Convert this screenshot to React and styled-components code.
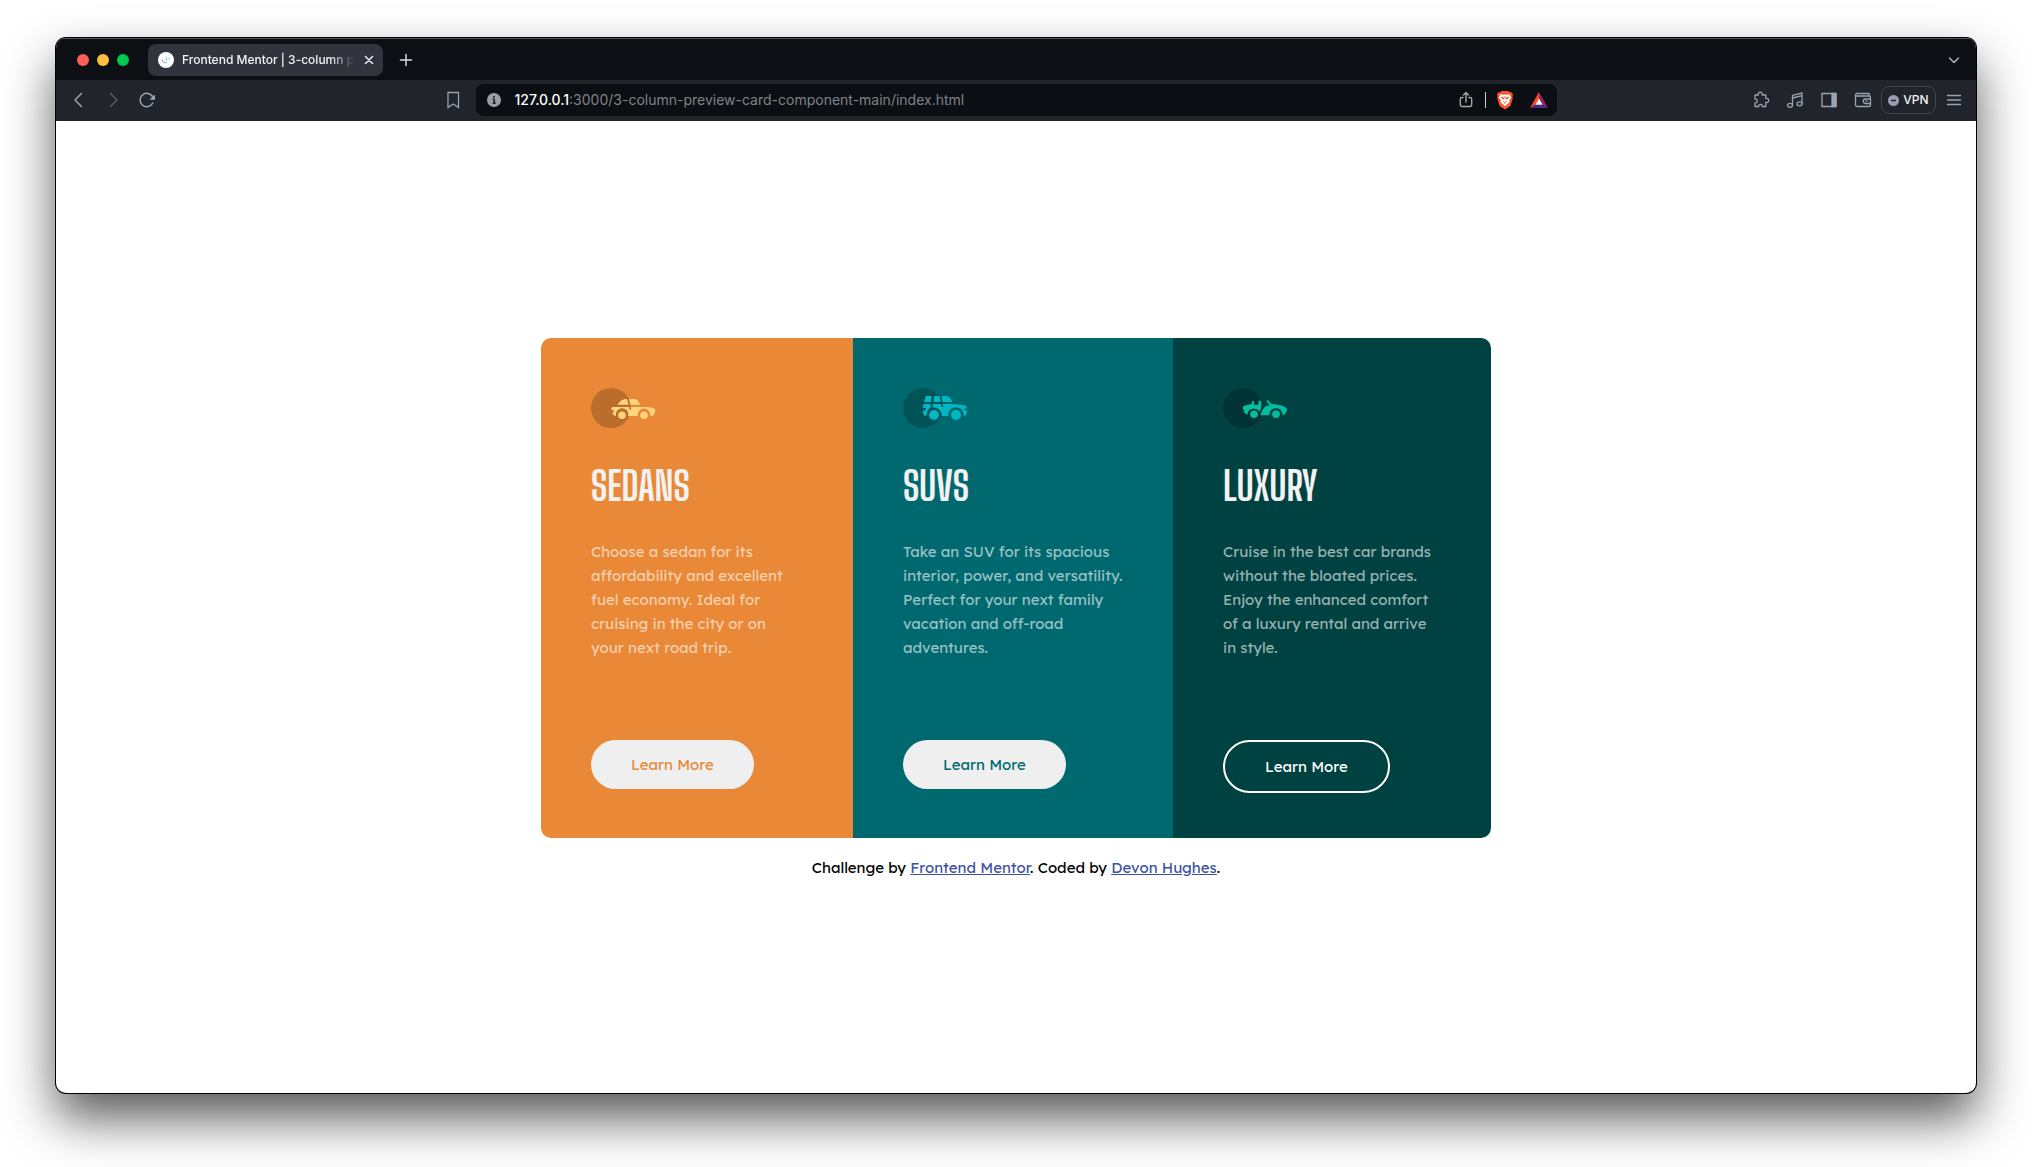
import React from "react";
import styled, { createGlobalStyle } from "styled-components";

const ui = `Inter, "Liberation Sans", sans-serif`;
const body = `"Lexend Deca", Inter, "Open Sans", sans-serif`;
const display = `"Big Shoulders Display", Roboto, sans-serif`;

const GlobalStyle = createGlobalStyle`
  *, *::before, *::after { box-sizing: border-box; }
  body { margin: 0; background: #fff; font-family: ${ui}; }
  h1, h2, p { margin: 0; }
  button { border: 0; background: none; padding: 0; font: inherit; cursor: pointer; }
`;

const Desktop = styled.div`
  display: flex;
  min-height: 100vh;
  padding: 38px 56px 74px;
`;

const Window = styled.div`
  display: flex;
  flex: 1;
  flex-direction: column;
  min-width: 0;
  overflow: hidden;
  border-radius: 10px;
  background: #fff;
  box-shadow: 0 0 0 1px #000, 0 25px 50px rgba(0, 0, 0, 0.66);
`;

const TabStrip = styled.header`
  display: flex;
  align-items: center;
  height: 42px;
  padding: 2px 10px 0 21px;
  background: #0c0f13;
  box-shadow: inset 0 1px 0 #54575a;
`;

const Lights = styled.div`
  display: flex;
  gap: 8px;
  margin-right: 19px;
`;

const Light = styled.button`
  width: 12px;
  height: 12px;
  border-radius: 50%;
  background: ${(p) => p.$color};
`;

const Tab = styled.div`
  display: flex;
  align-items: center;
  gap: 8px;
  width: 235px;
  height: 32px;
  padding: 0 8px 0 10px;
  border-radius: 8px;
  background: #31343d;
`;

const TabTitle = styled.span`
  flex: 1;
  white-space: nowrap;
  font-size: 12px;
  font-weight: 500;
  line-height: 16px;
  color: #f2f3f5;
  mask-image: linear-gradient(90deg, #000 148px, transparent 172px);
`;

const IconButton = styled.button`
  display: grid;
  place-items: center;
  flex: none;
  width: ${(p) => (p.$small ? 12 : 24)}px;
  height: 24px;
  color: ${(p) => p.$color || "#98a3b0"};
  svg { display: block; }
`;

const StripEnd = styled.div`
  display: flex;
  flex: 1;
  align-items: center;
  justify-content: space-between;
  padding-left: 11px;
`;

const Toolbar = styled.nav`
  display: grid;
  grid-template-columns: 1fr minmax(0, 1081px) 1fr;
  align-items: center;
  height: 41px;
  padding-bottom: 1px;
  background: #22242c;
`;

const ToolbarSide = styled.div`
  display: flex;
  align-items: center;
  justify-content: ${(p) => (p.$end ? "flex-end" : "space-between")};
  gap: 6px;
  padding: 0 ${(p) => (p.$end ? 10 : 11)}px;
`;

const IconGroup = styled.div`
  display: flex;
  gap: 10px;
`;

const AddressBar = styled.div`
  display: flex;
  align-items: center;
  height: 32px;
  padding: 0 6px;
  border-radius: 8px;
  background: #0b0e12;
`;

const Address = styled.div`
  flex: 1;
  padding-left: 9px;
  overflow: hidden;
  white-space: nowrap;
  outline: none;
  font-size: 14px;
  line-height: 20px;
  color: #808388;
`;

const Host = styled.span`
  font-weight: 500;
  color: #fff;
`;

const AddressTools = styled.div`
  display: flex;
  align-items: center;
  gap: 7px;
`;

const Divider = styled.span`
  width: 1px;
  height: 16px;
  background: #c9ccd0;
`;

const VpnButton = styled.button`
  display: flex;
  align-items: center;
  justify-content: center;
  gap: 4px;
  width: 55px;
  height: 28px;
  border: 1px solid #42454f;
  border-radius: 8px;
  font-size: 12px;
  font-weight: 500;
  line-height: 16px;
  color: #f2f3f5;
`;

const Page = styled.main`
  display: flex;
  flex: 1;
  flex-direction: column;
  align-items: center;
  justify-content: center;
  gap: 22px;
  font-family: ${body};
  font-size: 15px;
  font-weight: 400;
`;

const Cards = styled.section`
  display: flex;
  overflow: hidden;
  border-radius: 10px;
`;

const Card = styled.article`
  display: flex;
  flex-direction: column;
  align-items: flex-start;
  width: ${(p) => p.$width}px;
  padding: 50px 50px 45px;
  background: ${(p) => p.$color};
`;

const CardTitle = styled.h2`
  margin: 34px 0 30px;
  font-family: ${display};
  font-size: 40px;
  font-weight: 700;
  line-height: 48px;
  color: #f2f2f2;
`;

const CardText = styled.p`
  min-height: 120px;
  margin-bottom: 80px;
  white-space: pre;
  line-height: 24px;
  color: rgba(255, 255, 255, 0.6);
`;

const LearnMore = styled.button`
  padding: 15px 40px;
  border: ${(p) => (p.$outlined ? "2px solid #fff" : "0")};
  border-radius: 27px;
  background: ${(p) => (p.$outlined ? "transparent" : "#efefef")};
  line-height: 19px;
  color: ${(p) => p.$color};
`;

const Attribution = styled.footer`
  line-height: 16px;
  color: #000;
  a { color: #3e52a3; }
`;

const Stroke = ({ size = 18, width = 1.3, children }) => (
  <svg width={size} height={size} viewBox={`0 0 ${size} ${size}`} fill="none" stroke="currentColor" strokeWidth={width} strokeLinecap="round" strokeLinejoin="round" aria-hidden="true">
    {children}
  </svg>
);

const SedanIcon = () => (
  <svg width="65" height="40" viewBox="0 0 65 40" aria-hidden="true">
    <circle cx="20" cy="20" r="20" opacity=".2" />
    <g fill="#ffd47f">
      <path d="M26.7 16.8C28.6 13 31.5 11 36 11l1.6 5.8z" />
      <path d="M38 11h5.2c3 0 4.7 2.400 5.800 5.800H39.600z" />
      <path d="M21 19h17.300l.4 3h1.500l-.4-3H55c4.500.3 7.500.8 9.200 2 .3 3-.7 4.500-1.700 6.500l-3.300.5a6.300 6.300 0 1 0-12.400 0h-9.600a6.300 6.300 0 1 0-12.200.1c-2-.3-3-1.600-4-3.100l1.500-.4V22h-2.500z" />
      <circle cx="31" cy="27.300" r="3.800" />
      <circle cx="53" cy="27.300" r="3.800" />
    </g>
  </svg>
);

const SuvIcon = () => (
  <svg width="65" height="40" viewBox="0 0 65 40" aria-hidden="true">
    <circle cx="20" cy="20" r="20" opacity=".2" />
    <g fill="#00b8c4">
      <path d="M22.800 8h6l-1 6H21z" />
      <path d="M31.200 8h5.300l1.200 6h-7.200z" />
      <path d="M38.600 8h4.200c3.600 0 5.200 2.800 6.400 6h-9.400z" />
      <path d="M20.300 16h7.200l.2 3.600c-2.600 1.400-4 4-4.200 8.200L21 27.500 20 25v-2.500h2.500V20H20z" />
      <path d="M29.600 16h8.500l.5 3h1.800l-.5-3H49c6 .6 11 .8 14.500 2l.2 2.500h-2.200v2H64c0 2.500-.8 4.300-2 5.500h-1.200c.2-5-3-8.800-7.800-8.800s-8 3.800-7.900 8.800h-6.300c.2-4.700-3.500-8.800-9.200-8.800z" />
      <circle cx="31" cy="27" r="5" />
      <circle cx="53" cy="27" r="5" />
    </g>
  </svg>
);

const LuxuryIcon = () => (
  <svg width="65" height="40" viewBox="0 0 65 40" aria-hidden="true">
    <circle cx="20" cy="20" r="20" opacity=".2" />
    <g fill="#00bfa0">
      <path d="M20 18.500c3-1.500 5.500-2 8-2.300l1-1V13.200l1.800-.4.2 3.700c1.500.8 3 .5 4.600-.2l-.3-3 2-.9c1 1 1.300 2.500 1.200 4.200l-1 6-1 1c-1.200-1.800-3.200-2.900-5.500-2.900-4 0-6.500 2.500-6.500 6-2-.7-3.100-2-4-3.800l1-1-1.500-1z" />
      <path d="M37.600 27.200c.8-3.700 2.200-6.800 5-9l4.600-1-3.900-3.700L44.500 12l4.200 4c6.500.4 12.800 1.800 15.300 4.800.2 2.700-1.400 5-3.700 6.200h-.9c.2-4.200-2.600-6.800-6.600-6.800s-6.400 2.800-6.300 7z" />
      <circle cx="31" cy="26.300" r="3.800" />
      <circle cx="53" cy="26.300" r="3.800" />
    </g>
  </svg>
);

const cars = [
  {
    title: "SEDANS",
    width: 312,
    color: "#e98937",
    icon: <SedanIcon />,
    text: "Choose a sedan for its\naffordability and excellent\nfuel economy. Ideal for\ncruising in the city or on\nyour next road trip.",
  },
  {
    title: "SUVS",
    width: 320,
    color: "#00696f",
    icon: <SuvIcon />,
    text: "Take an SUV for its spacious\ninterior, power, and versatility.\nPerfect for your next family\nvacation and off-road\nadventures.",
  },
  {
    title: "LUXURY",
    width: 318,
    color: "#004241",
    icon: <LuxuryIcon />,
    outlined: true,
    text: "Cruise in the best car brands\nwithout the bloated prices.\nEnjoy the enhanced comfort\nof a luxury rental and arrive\nin style.",
  },
];

const BrowserTabs = () => (
  <TabStrip>
    <Lights>
      <Light $color="#ff5f57" aria-label="Close window" />
      <Light $color="#febc40" aria-label="Minimise window" />
      <Light $color="#00ca4e" aria-label="Zoom window" />
    </Lights>
    <Tab>
      <svg width="16" height="16" viewBox="0 0 16 16" fill="none" aria-hidden="true">
        <circle cx="8" cy="8" r="8" fill="#fff" />
        <path d="M4 7.500c.3 2.400 2 3.600 4.700 3.300" stroke="#8b94c8" />
        <path d="M8.500 5v4" stroke="#7fd3d8" />
        <path d="m12 5.500-2 1.200 2 1.200" stroke="#a9dfe2" />
      </svg>
      <TabTitle>Frontend Mentor | 3-column p</TabTitle>
      <IconButton $small $color="#e6e8ea" aria-label="Close tab">
        <Stroke size={12} width={1.6}><path d="m2.500 2.500 7 7M9.500 2.500l-7 7" /></Stroke>
      </IconButton>
    </Tab>
    <StripEnd>
      <IconButton $color="#d9dcdf" aria-label="New tab">
        <Stroke size={14} width={1.5}><path d="M7 1.500v11M1.500 7h11" /></Stroke>
      </IconButton>
      <IconButton $color="#a8b0b8" aria-label="Search tabs">
        <Stroke size={12} width={1.6}><path d="m1.500 4 4.500 4.500L10.500 4" /></Stroke>
      </IconButton>
    </StripEnd>
  </TabStrip>
);

const BrowserToolbar = () => (
  <Toolbar>
    <ToolbarSide>
      <IconGroup>
        <IconButton aria-label="Back"><Stroke width={1.5}><path d="M11.500 2.500 5 9l6.500 6.500" /></Stroke></IconButton>
        <IconButton $color="#565b66" aria-label="Forward"><Stroke width={1.5}><path d="M6.500 2.500 13 9l-6.500 6.500" /></Stroke></IconButton>
        <IconButton aria-label="Reload">
          <Stroke width={1.5}>
            <path d="M14.800 12A6.700 6.700 0 1 1 15.200 7" />
            <path d="M16.500 4.500V8.300H12.700z" fill="currentColor" strokeWidth="1" />
          </Stroke>
        </IconButton>
      </IconGroup>
      <IconButton aria-label="Bookmark this page"><Stroke><path d="M4 1.500h10.500v15L9.300 13 4 16.500z" strokeLinejoin="miter" /></Stroke></IconButton>
    </ToolbarSide>
    <AddressBar>
      <IconButton $color="#9b9fa5" aria-label="Site information">
        <svg width="14" height="14" viewBox="0 0 14 14" fill="none" aria-hidden="true">
          <circle cx="7" cy="7" r="7" fill="currentColor" />
          <path d="M5.500 6.300H7.300V10M5.500 10.200h3.300" stroke="#0b0e12" strokeWidth="1.300" />
          <circle cx="7" cy="3.900" r=".9" fill="#0b0e12" />
        </svg>
      </IconButton>
      <Address role="textbox" aria-label="Address" contentEditable suppressContentEditableWarning spellCheck={false}>
        <Host>127.0.0.1</Host>:3000/3-column-preview-card-component-main/index.html
      </Address>
      <AddressTools>
        <IconButton $color="#a4a6aa" aria-label="Share">
          <Stroke width={1.4}><path d="M6 6.500H5A1.700 1.700 0 0 0 3.300 8.200v5.600A1.700 1.700 0 0 0 5 15.500h8a1.700 1.700 0 0 0 1.700-1.700V8.200A1.700 1.700 0 0 0 13 6.500h-1M9 11V1.800M6.500 4 9 1.500 11.500 4" /></Stroke>
        </IconButton>
        <Divider />
        <IconGroup>
          <IconButton aria-label="Brave Shields">
            <svg width="18" height="20" viewBox="0 0 18 20" aria-hidden="true">
              <path d="M5.500 1h7L14 2.500l1.700-.2L17 4.500l-.6 2 .5 1.300-2.500 8.200L9 19.500 3.600 16 1.100 7.800l.5-1.300L1 4.500l1.300-2.200 1.700.2z" fill="#fb542b" />
              <path d="m4.500 4.300 2.500.5L9 4.400l2 .4 2.500-.5 1.700 3.200-2 3 .3 1.700-4.500 4-4.500-4 .3-1.700-2-3z" fill="#fff" />
              <path d="m5 7.200 2.700.6-.3 1.500zM13 7.200l-2.700.6.3 1.500z" fill="#fb542b" stroke="#fb542b" strokeWidth=".8" />
              <path d="M7 11.300 9 12.500l2-1.200M9 12.500V14M9 6v3" fill="none" stroke="#fb542b" strokeWidth=".8" />
            </svg>
          </IconButton>
          <IconButton aria-label="Brave Rewards">
            <svg width="18" height="16" viewBox="0 0 18 16" aria-hidden="true">
              <path d="M9 0 0 16l9-5.500z" fill="#ff4724" />
              <path d="M9 0l9 16-9-5.500z" fill="#9e1f63" />
              <path d="M0 16l5.500-3.500h7L18 16z" fill="#4c2a85" />
              <path d="m9 6.500 3.600 6.200H5.400z" fill="#fff" />
            </svg>
          </IconButton>
        </IconGroup>
      </AddressTools>
    </AddressBar>
    <ToolbarSide $end>
      <IconGroup>
        <IconButton aria-label="Extensions">
          <Stroke><path d="M3 4h3.300c-.4-1.700.4-2.800 1.900-2.800S10.500 2.300 10.100 4h3.700v3.500c1.700-.4 2.900.3 2.900 1.900s-1.200 2.300-2.900 1.900v4.200h-3.500c.2-1.300-.6-2.100-1.800-2.100s-2 .8-1.800 2.100H3V12c1.400.2 2.200-.6 2.200-1.900S4.400 8 3 8.200z" /></Stroke>
        </IconButton>
        <IconButton aria-label="Media">
          <Stroke><path d="M6.500 14V4.300L16 2v10.500M6.500 7 16 4.700" /><ellipse cx="4" cy="14.300" rx="2.500" ry="2" /><ellipse cx="13.500" cy="12.800" rx="2.500" ry="2" /></Stroke>
        </IconButton>
        <IconButton aria-label="Sidebar">
          <Stroke><path d="M2 2.500h14v13H2z" strokeLinejoin="miter" /><path d="M12 2.500h4v13h-4z" fill="currentColor" /></Stroke>
        </IconButton>
        <IconButton aria-label="Wallet">
          <Stroke><path d="M15.500 5V3.500A1 1 0 0 0 14.500 2.500H3A1.500 1.500 0 0 0 1.500 4v10A1.500 1.500 0 0 0 3 15.500h12a1.500 1.500 0 0 0 1.500-1.500V6.500A1.500 1.500 0 0 0 15 5H2M16.500 8h-5a2 2 0 0 0 0 4.500h5M12 10.200h1" /></Stroke>
        </IconButton>
      </IconGroup>
      <VpnButton>
        <svg width="11" height="11" viewBox="0 0 11 11" aria-hidden="true">
          <circle cx="5.500" cy="5.500" r="5.500" fill="#9a9db5" />
          <path d="M3 5.500h5" stroke="#22242c" strokeWidth="1.500" />
        </svg>
        VPN
      </VpnButton>
      <IconButton aria-label="Menu"><Stroke size={16}><path d="M1.500 3.500h13M1.500 8h13M1.500 12.500h13" /></Stroke></IconButton>
    </ToolbarSide>
  </Toolbar>
);

export default function App() {
  return (
    <Desktop>
      <GlobalStyle />
      <Window>
        <BrowserTabs />
        <BrowserToolbar />
        <Page>
          <Cards>
            {cars.map((car) => (
              <Card key={car.title} $color={car.color} $width={car.width}>
                {car.icon}
                <CardTitle>{car.title}</CardTitle>
                <CardText>{car.text}</CardText>
                <LearnMore $outlined={car.outlined} $color={car.outlined ? "#fff" : car.color}>
                  Learn More
                </LearnMore>
              </Card>
            ))}
          </Cards>
          <Attribution>
            Challenge by <a href="#frontend-mentor">Frontend Mentor</a>. Coded by <a href="#devon-hughes">Devon Hughes</a>.
          </Attribution>
        </Page>
      </Window>
    </Desktop>
  );
}
